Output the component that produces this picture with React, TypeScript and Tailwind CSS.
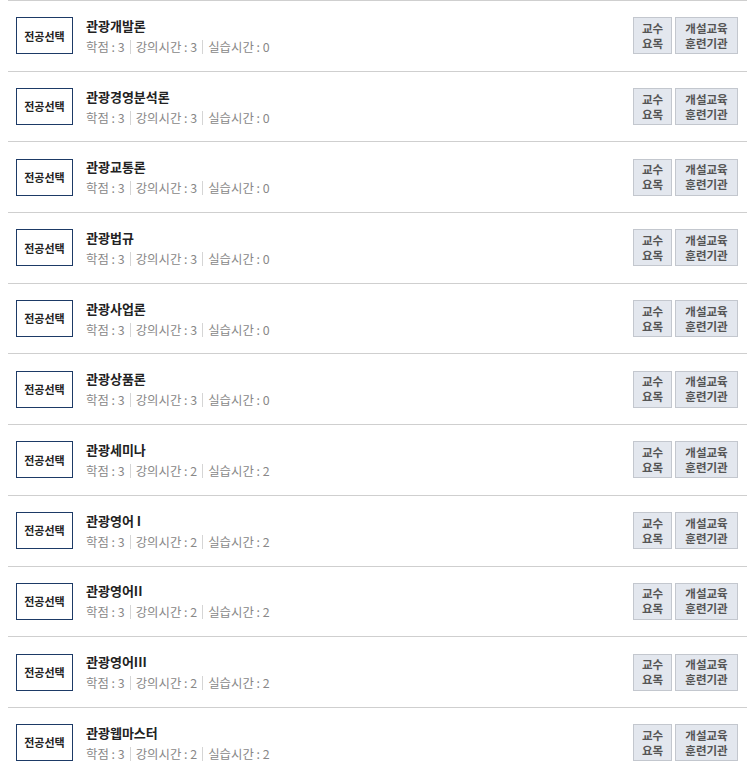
import React from 'react';

const courses = [
  { name: '관광개발론', credit: 3, lecture: 3, practice: 0 },
  { name: '관광경영분석론', credit: 3, lecture: 3, practice: 0 },
  { name: '관광교통론', credit: 3, lecture: 3, practice: 0 },
  { name: '관광법규', credit: 3, lecture: 3, practice: 0 },
  { name: '관광사업론', credit: 3, lecture: 3, practice: 0 },
  { name: '관광상품론', credit: 3, lecture: 3, practice: 0 },
  { name: '관광세미나', credit: 3, lecture: 2, practice: 2 },
  { name: '관광영어 I', credit: 3, lecture: 2, practice: 2 },
  { name: '관광영어II', credit: 3, lecture: 2, practice: 2 },
  { name: '관광영어III', credit: 3, lecture: 2, practice: 2 },
  { name: '관광웹마스터', credit: 3, lecture: 2, practice: 2 },
];

function Meta({ label, value, first }: { label: string; value: number; first?: boolean }) {
  return (
    <span className={first ? 'pr-[5px]' : 'border-l border-[#d5d5d5] px-[5px]'}>
      {label} : {value}
    </span>
  );
}

export default function App() {
  return (
    <div className="w-[755px] bg-white px-2 font-['Noto_Sans_CJK_KR','Noto_Sans',sans-serif]">
      {courses.map((c, i) => (
        <div key={i} className="flex h-[70.7px] items-center border-t border-[#cfcfcf] pl-2 pr-[9px]">
          <div className="flex h-[37px] w-[57px] items-center justify-center border border-[#1d3a66] text-[11px] font-bold text-[#222]">
            전공선택
          </div>
          <div className="ml-[13px] flex-1 -mt-[1px]">
            <div className="text-[13px] font-bold leading-[18px] text-[#222]">{c.name}</div>
            <div className="mt-[5px] flex text-[12.4px] leading-[14px] text-[#888]">
              <Meta label="학점" value={c.credit} first />
              <Meta label="강의시간" value={c.lecture} />
              <Meta label="실습시간" value={c.practice} />
            </div>
          </div>
          <div className="flex gap-[3px]">
            <button className="flex h-[37px] w-[39px] flex-col items-center justify-center border border-[#c3c7ce] bg-[#e3e7ee] text-[11.5px] font-bold leading-[15px] text-[#555]">
              <span>교수</span>
              <span>요목</span>
            </button>
            <button className="flex h-[37px] w-[63px] flex-col items-center justify-center border border-[#c3c7ce] bg-[#e3e7ee] text-[11.5px] font-bold leading-[15px] text-[#555]">
              <span>개설교육</span>
              <span>훈련기관</span>
            </button>
          </div>
        </div>
      ))}
    </div>
  );
}
